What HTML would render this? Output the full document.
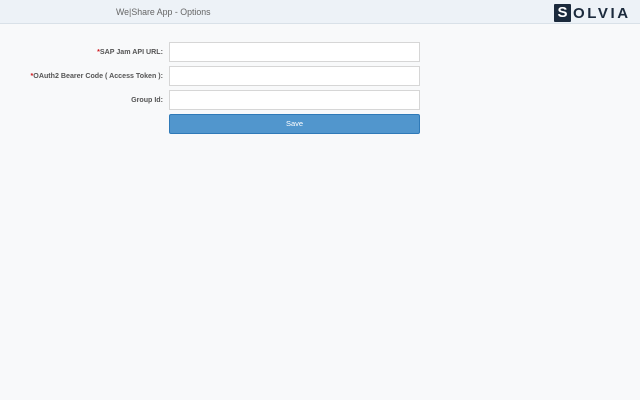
<!DOCTYPE html>
<html><head><meta charset="utf-8"><style>
html,body{margin:0;padding:0;width:640px;height:400px;background:#f8f9fa;overflow:hidden;font-family:"Liberation Sans",sans-serif}
.hdr{position:absolute;left:0;top:0;width:640px;height:23px;background:#edf2f7;border-bottom:1px solid #d9e1e8}
.title{position:absolute;left:116px;top:7px;font-size:8.8px;color:#666}
.logo{position:absolute;left:554px;top:4px;height:18px;display:flex;align-items:center}
.logo .s{width:17px;height:18px;background:#1b2a3c;color:#fff;font-weight:bold;font-size:15px;line-height:18px;text-align:center;border-radius:1px}
.logo .r{font-weight:bold;font-size:15px;color:#1b2a3c;letter-spacing:2.6px;margin-left:2px}
.lbl{position:absolute;right:477px;font-size:7.1px;font-weight:bold;color:#555;white-space:nowrap}
.lbl b{color:#d0161b}
.inp{position:absolute;left:169px;width:249px;height:18px;background:#fff;border:1px solid #d6d6d6;box-sizing:content-box}
.btn{position:absolute;left:169px;top:114px;width:249px;height:18px;background:#5196cd;border:1px solid #2f7ab8;border-radius:2px;color:#fff;font-size:7.5px;text-align:center;line-height:18px}
</style></head><body>
<div class="hdr"><div class="title">We|Share App - Options</div>
<div class="logo"><div class="s">S</div><div class="r">OLVIA</div></div></div>
<div class="lbl" style="top:48px"><b>*</b>SAP Jam API URL:</div>
<div class="inp" style="top:42px"></div>
<div class="lbl" style="top:72px"><b>*</b>OAuth2 Bearer Code ( Access Token ):</div>
<div class="inp" style="top:66px"></div>
<div class="lbl" style="top:96px">Group Id:</div>
<div class="inp" style="top:90px"></div>
<div class="btn">Save</div>
</body></html>
